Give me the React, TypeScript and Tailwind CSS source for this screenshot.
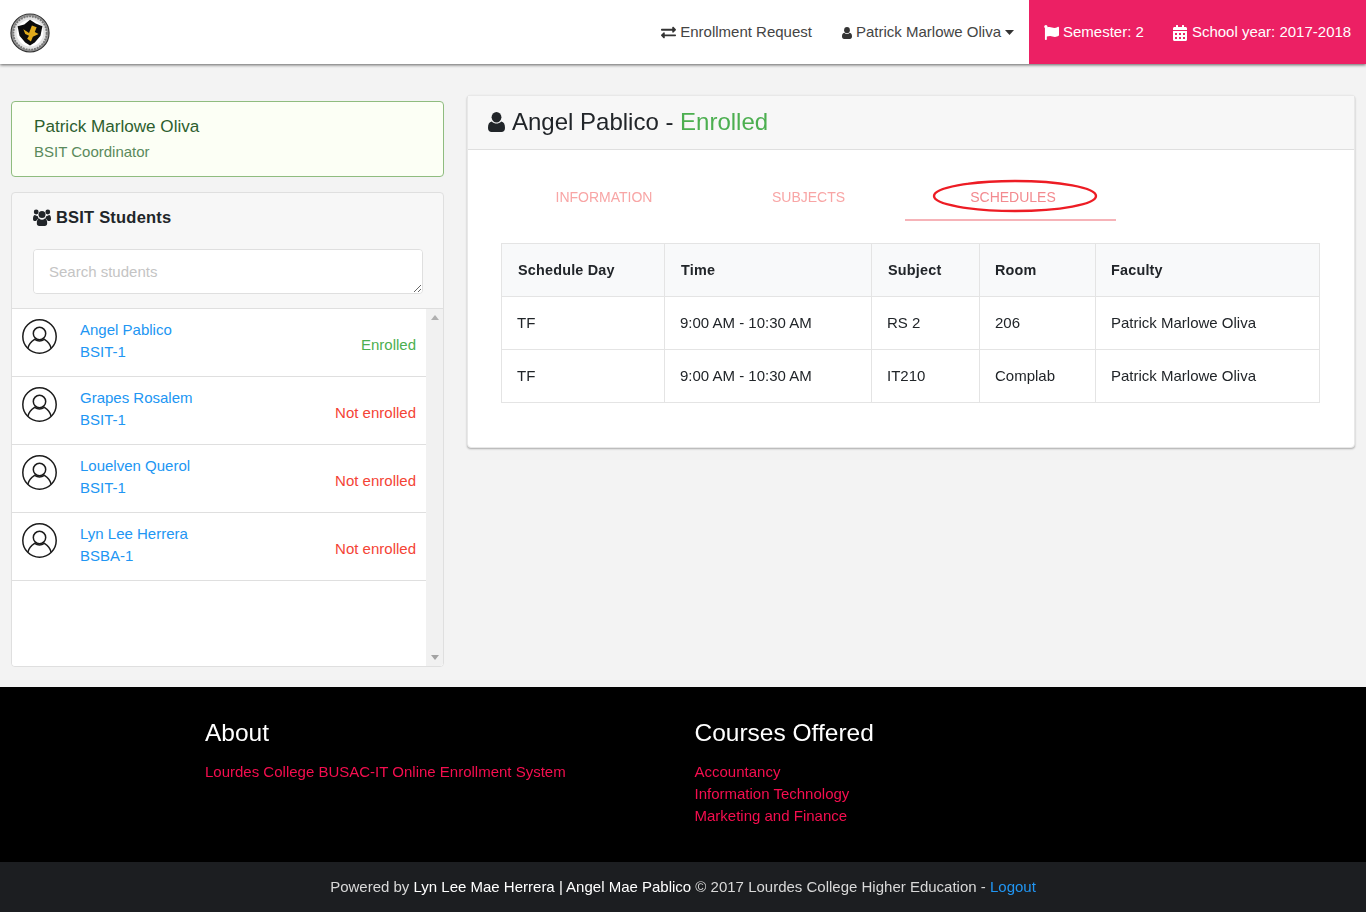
import { FaCalendarAlt, FaExchangeAlt, FaFlag } from "react-icons/fa";

type Student = { name: string; course: string; enrolled: boolean };

const students: Student[] = [
  { name: "Angel Pablico", course: "BSIT-1", enrolled: true },
  { name: "Grapes Rosalem", course: "BSIT-1", enrolled: false },
  { name: "Louelven Querol", course: "BSIT-1", enrolled: false },
  { name: "Lyn Lee Herrera", course: "BSBA-1", enrolled: false },
];

const schedules = [
  ["TF", "9:00 AM - 10:30 AM", "RS 2", "206", "Patrick Marlowe Oliva"],
  ["TF", "9:00 AM - 10:30 AM", "IT210", "Complab", "Patrick Marlowe Oliva"],
];

function Logo() {
  return (
    <svg width="40" height="40" viewBox="0 0 42 42">
      <circle cx="21" cy="21" r="20" fill="#9a9a9a" stroke="#333" strokeWidth="1.2" />
      <circle cx="21" cy="21" r="17.5" fill="#e4e4e4" strokeDasharray="2 1" stroke="#777" strokeWidth="2" />
      <circle cx="21" cy="21" r="14" fill="#fff" />
      <path d="M8 14 L15 12 L21 7 L27 11 L34 14 L32 24 L26 31 L21 34 L16 31 L10 24 Z" fill="#0b0b0b" />
      <path d="M14 17 L20 21 L23 13 L28 15 L26 20 L30 22 L24 25 L22 30 L18 27 L20 24 L16 22 Z" fill="#e0aa1c" />
    </svg>
  );
}

// font awesome 4 style user, the package only has the newer shape
function UserIcon({ className }: { className: string }) {
  return (
    <svg className={className} viewBox="0 0 17 20" fill="currentColor">
      <ellipse cx="8.5" cy="5.2" rx="4.9" ry="5.2" />
      <path d="M0 16 C0 12.5 1 10.2 3.8 9.6 C5.2 11 6.8 11.6 8.5 11.6 C10.2 11.6 11.8 11 13.2 9.6 C16 10.2 17 12.5 17 16 C17 18.5 15.5 20 13.5 20 H3.5 C1.5 20 0 18.5 0 16 Z" />
    </svg>
  );
}

function UsersIcon() {
  return (
    <svg className="h-[17px] w-[18px]" viewBox="0 0 18 17" fill="currentColor">
      <circle cx="3.2" cy="3" r="2.4" />
      <circle cx="14.8" cy="3" r="2.4" />
      <circle cx="9" cy="5.4" r="3.5" />
      <path d="M0 10 C0 7.5 0.8 6.3 2 6.1 C2.8 6.7 3.6 7 4.6 7 C4.8 8 5.4 9 6 9.6 C4.6 10 3.6 11 3.2 12 H1.4 C0.5 12 0 11.2 0 10 Z" />
      <path d="M18 10 C18 7.5 17.2 6.3 16 6.1 C15.2 6.7 14.4 7 13.4 7 C13.2 8 12.6 9 12 9.6 C13.4 10 14.4 11 14.8 12 H16.6 C17.5 12 18 11.2 18 10 Z" />
      <path d="M3.8 14.2 C3.8 11.4 4.6 9.8 6.2 9.5 C7 10.3 8 10.7 9 10.7 C10 10.7 11 10.3 11.8 9.5 C13.4 9.8 14.2 11.4 14.2 14.2 C14.2 16 13.2 17 11.8 17 H6.2 C4.8 17 3.8 16 3.8 14.2 Z" />
    </svg>
  );
}

function UserCircle() {
  return (
    <svg width="35" height="35" viewBox="0 0 35 35" fill="none" stroke="#1c1c1c" strokeWidth="1.5">
      <circle cx="17.5" cy="17.5" r="16.7" />
      <circle cx="17.5" cy="14.5" r="6.2" />
      <path d="M6 29 C6.8 25 9 22.8 12.6 20.4 C15.5 22.3 19.5 22.3 22.4 20.4 C26 22.8 28.2 25 29 29" />
    </svg>
  );
}

function StudentRow({ student }: { student: Student }) {
  return (
    <div className="flex h-[68px] border-b border-[#dfdfdf] px-[10px]">
      <div className="w-[58px] pt-[10px]">
        <UserCircle />
      </div>
      <div className="flex-1 pt-[10px] text-[#2196f3]">
        <div className="leading-[22px]">{student.name}</div>
        <div className="leading-[22px]">{student.course}</div>
      </div>
      <div className={`pt-[25px] leading-[22px] ${student.enrolled ? "text-[#4caf50]" : "text-[#f44336]"}`}>
        {student.enrolled ? "Enrolled" : "Not enrolled"}
      </div>
    </div>
  );
}

export default function App() {
  return (
    <div className="min-h-[912px] bg-[#f3f3f3] font-['Liberation_Sans',Arial,sans-serif] text-[15px] text-[#212529]">
      <nav className="relative flex h-[64px] items-stretch justify-between bg-white shadow-[0_1px_3px_rgba(0,0,0,0.6)]">
        <div className="flex items-center pl-[10px] pt-[1px]">
          <Logo />
        </div>
        <div className="flex items-stretch">
          <div className="flex items-center gap-[4px] pr-[30px] pt-[1px] text-[#444]">
            <FaExchangeAlt className="text-[15px] text-[#333]" />
            <span>Enrollment Request</span>
          </div>
          <div className="flex items-center pr-[15px] pt-[1px] text-[#444]">
            <UserIcon className="mr-[4px] h-[12px] w-[10px] text-[#333]" />
            <span>Patrick Marlowe Oliva</span>
            <svg className="ml-[4px]" width="9" height="5" viewBox="0 0 9 5" fill="#333">
              <path d="M0 0 H9 L4.5 5 Z" />
            </svg>
          </div>
          <div className="flex w-[337px] items-center gap-[28px] bg-[#ec2064] pl-[15px] pt-[1px] text-white">
            <span className="flex items-center gap-[4px]">
              <FaFlag className="text-[15px]" />
              Semester: 2
            </span>
            <span className="flex items-center gap-[4px]">
              <FaCalendarAlt className="text-[16px]" />
              School year: 2017-2018
            </span>
          </div>
        </div>
      </nav>

      <main className="flex h-[623px] items-start gap-[23px] px-[11px]">
        <aside className="mt-[37px] w-[433px] shrink-0">
          <div className="h-[76px] rounded-[4px] border border-[#8fbc7f] bg-[#fcfff5] px-[22px] pt-[14px]">
            <div className="text-[17.1px] leading-[22px] text-[#2c5e2e]">Patrick Marlowe Oliva</div>
            <div className="mt-[4px] leading-[20px] text-[#5a8a5c]">BSIT Coordinator</div>
          </div>

          <div className="mt-[15px] overflow-hidden rounded-[4px] border border-[#dfdfdf] bg-[#f7f7f7]">
            <div className="h-[116px] border-b border-[#dfdfdf] px-[21px]">
              <h2 className="flex items-center gap-[5px] pt-[14px] text-[16.5px] leading-[20px] font-bold tracking-[0.2px]">
                <UsersIcon />
                BSIT Students
              </h2>
              <textarea
                placeholder="Search students"
                className="mt-[22px] block h-[45px] w-[390px] rounded-[4px] border border-[#dfdfdf] bg-white px-[15px] py-[12px] text-[15px] leading-[20px] placeholder:text-[#c4c4c4]"
              />
            </div>
            <div className="flex h-[357px] bg-white">
              <div className="flex-1">
                {students.map((s) => (
                  <StudentRow key={s.name} student={s} />
                ))}
              </div>
              <div className="flex w-[17px] flex-col items-center justify-between bg-[#f1f1f1] py-[6px]">
                <div className="h-0 w-0 border-x-[4px] border-b-[5px] border-x-transparent border-b-[#b0b0b0]" />
                <div className="h-0 w-0 border-x-[4px] border-t-[5px] border-x-transparent border-t-[#a3a3a3]" />
              </div>
            </div>
          </div>
        </aside>

        <section className="mt-[31px] flex-1 rounded-[4px] border border-[#e8e8e8] bg-white shadow-[0_1px_2px_rgba(0,0,0,0.3)]">
          <div className="flex h-[54px] items-center gap-[7px] border-b border-[#dfdfdf] bg-[#f7f7f7] px-[20px] pb-[2px] text-[24px]">
            <UserIcon className="h-[20px] w-[17px]" />
            <span>
              Angel Pablico - <span className="text-[#4caf50]">Enrolled</span>
            </span>
          </div>
          <div className="px-[33px] pb-[44px]">
            <div className="flex pt-[22px] text-[14px] text-[#f8a5a5]">
              <div className="flex h-[49px] w-[206px] items-center justify-center pt-[2px]">INFORMATION</div>
              <div className="flex h-[49px] w-[198px] items-center justify-center pl-[5px] pt-[2px]">SUBJECTS</div>
              <div className="relative flex h-[49px] w-[211px] items-center justify-center border-b-2 border-[#f6b3b8] pl-[5px] pt-[4px] text-[#f38a8f]">
                SCHEDULES
                <svg className="absolute left-[27px] top-[7px]" width="166" height="34" viewBox="0 0 166 34" fill="none">
                  <ellipse cx="83" cy="17" rx="81" ry="15" stroke="#ed1c24" strokeWidth="2.4" />
                </svg>
              </div>
            </div>
            <table className="mt-[22px] w-[818px] table-fixed border-collapse border border-[#d4d4d4]">
              <colgroup>
                <col className="w-[163px]" />
                <col className="w-[207px]" />
                <col className="w-[108px]" />
                <col className="w-[116px]" />
                <col className="w-[224px]" />
              </colgroup>
              <thead>
                <tr className="h-[53px] bg-[#f8f9fa] text-left text-[14.4px] tracking-[0.2px]">
                  <th className="border border-[#e4e4e4] pl-[16px] pt-[1px] font-bold">Schedule Day</th>
                  <th className="border border-[#e4e4e4] pl-[16px] pt-[1px] font-bold">Time</th>
                  <th className="border border-[#e4e4e4] pl-[16px] pt-[1px] font-bold">Subject</th>
                  <th className="border border-[#e4e4e4] pl-[15px] pt-[1px] font-bold">Room</th>
                  <th className="border border-[#e4e4e4] pl-[15px] pt-[1px] font-bold">Faculty</th>
                </tr>
              </thead>
              <tbody>
                {schedules.map((row, i) => (
                  <tr key={i} className="h-[53px]">
                    {row.map((cell, j) => (
                      <td key={j} className="border border-[#e4e4e4] pl-[15px] pt-[1px]">
                        {cell}
                      </td>
                    ))}
                  </tr>
                ))}
              </tbody>
            </table>
          </div>
        </section>
      </main>

      <footer className="h-[175px] bg-black pl-[205px] pt-[30px]">
        <div className="flex">
          <div className="w-[489.5px]">
            <h3 className="text-[24.5px] leading-[32px] text-white">About</h3>
            <p className="mt-[12px] leading-[22px] text-[#f50e4f]">Lourdes College BUSAC-IT Online Enrollment System</p>
          </div>
          <div>
            <h3 className="text-[24.5px] leading-[32px] text-white">Courses Offered</h3>
            <ul className="mt-[12px] leading-[22px] text-[#f50e4f]">
              <li>Accountancy</li>
              <li>Information Technology</li>
              <li>Marketing and Finance</li>
            </ul>
          </div>
        </div>
      </footer>
      <div className="flex h-[50px] items-center justify-center bg-[#1c1e21] pt-[1px] text-[#d8d8d8]">
        <span>
          Powered by <span className="text-white">Lyn Lee Mae Herrera | Angel Mae Pablico</span> © 2017 Lourdes College Higher Education -{" "}
          <span className="text-[#2196f3]">Logout</span>
        </span>
      </div>
    </div>
  );
}
